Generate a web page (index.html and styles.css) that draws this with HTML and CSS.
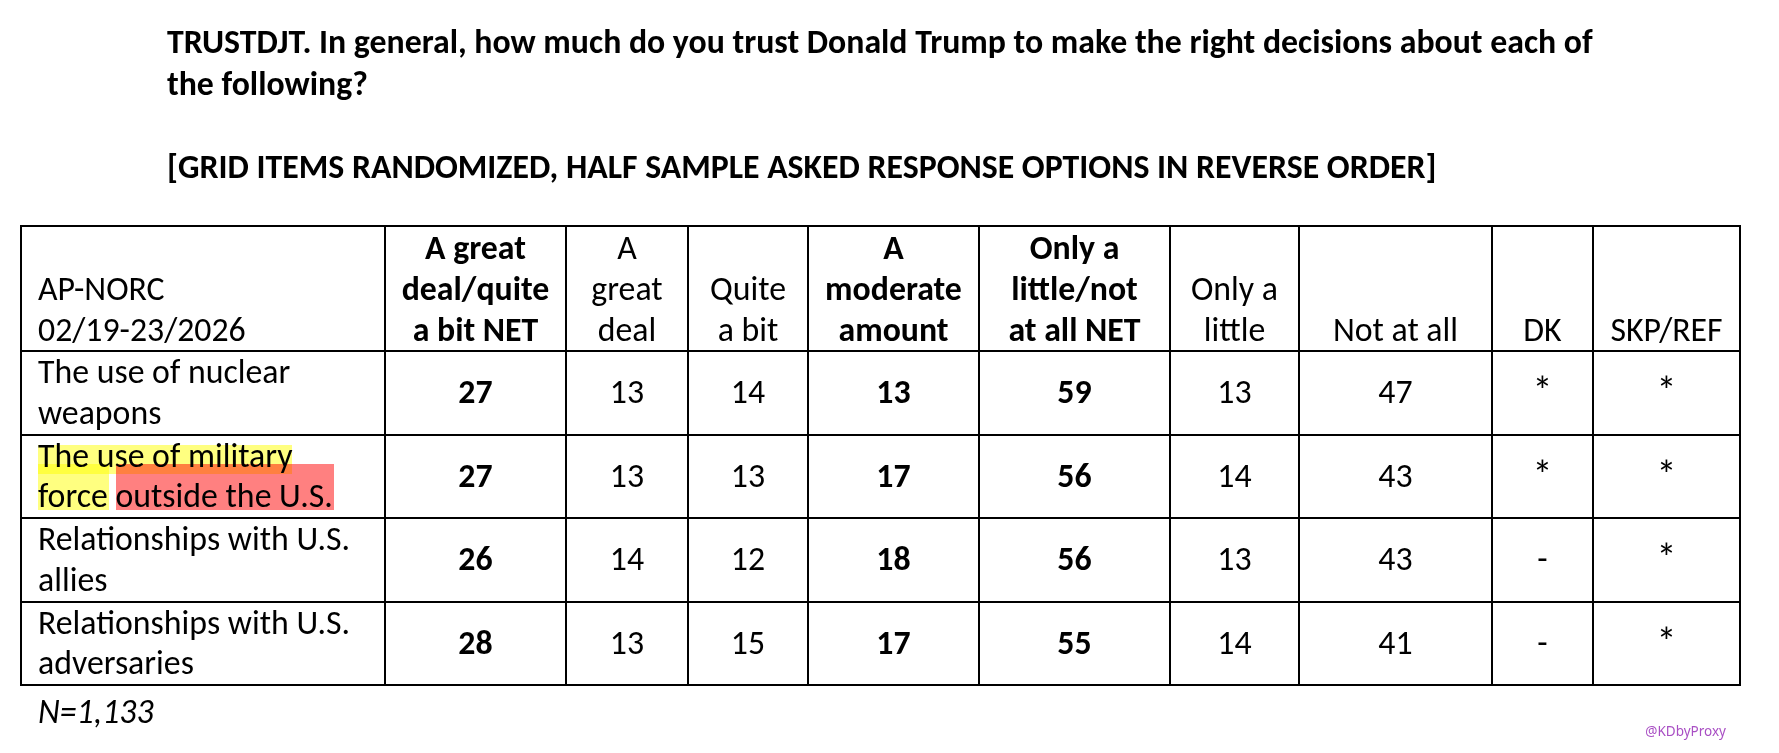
FILE: index.html
```html
<!DOCTYPE html>
<html lang="en">
<head>
<meta charset="utf-8">
<title>TRUSTDJT</title>
<link rel="stylesheet" href="styles.css">
</head>
<body>
<div class="page">
  <div class="question">
    <p class="q-text">TRUSTDJT. In general, how much do you trust Donald Trump to make the right decisions about each of<br>the following?</p>
    <p class="q-note">[GRID ITEMS RANDOMIZED, HALF SAMPLE ASKED RESPONSE OPTIONS IN REVERSE ORDER]</p>
  </div>

  <table class="grid">
    <colgroup>
      <col class="c-label">
      <col class="c-net1">
      <col class="c-great">
      <col class="c-quite">
      <col class="c-mod">
      <col class="c-net2">
      <col class="c-little">
      <col class="c-notall">
      <col class="c-dk">
      <col class="c-skp">
    </colgroup>
    <thead>
      <tr>
        <th class="label">AP-NORC<br>02/19-23/2026</th>
        <th class="bold">A great<br>deal/quite<br>a bit NET</th>
        <th>A<br>great<br>deal</th>
        <th>Quite<br>a bit</th>
        <th class="bold">A<br>moderate<br>amount</th>
        <th class="bold">Only a<br>little/not<br>at all NET</th>
        <th>Only a<br>little</th>
        <th>Not at all</th>
        <th>DK</th>
        <th>SKP/REF</th>
      </tr>
    </thead>
    <tbody>
      <tr>
        <td class="label">The use of nuclear<br>weapons</td>
        <td class="bold">27</td><td>13</td><td>14</td><td class="bold">13</td><td class="bold">59</td><td>13</td><td>47</td><td class="ast">*</td><td class="ast">*</td>
      </tr>
      <tr>
        <td class="label marked">
          <span class="mark mark-y1"></span>
          <span class="mark mark-y2"></span>
          <span class="mark mark-r"></span>
          The use of military<br>force outside the U.S.
        </td>
        <td class="bold">27</td><td>13</td><td>13</td><td class="bold">17</td><td class="bold">56</td><td>14</td><td>43</td><td class="ast">*</td><td class="ast">*</td>
      </tr>
      <tr>
        <td class="label">Relationships with U.S.<br>allies</td>
        <td class="bold">26</td><td>14</td><td>12</td><td class="bold">18</td><td class="bold">56</td><td>13</td><td>43</td><td>-</td><td class="ast">*</td>
      </tr>
      <tr>
        <td class="label">Relationships with U.S.<br>adversaries</td>
        <td class="bold">28</td><td>13</td><td>15</td><td class="bold">17</td><td class="bold">55</td><td>14</td><td>41</td><td>-</td><td class="ast">*</td>
      </tr>
    </tbody>
  </table>

  <div class="footer">
    <p class="n">N=1,133</p>
    <p class="credit">@KDbyProxy</p>
  </div>
</div>
</body>
</html>
```

FILE: styles.css
```css
html, body {
  margin: 0;
  padding: 0;
  background: #ffffff;
}

body {
  font-family: "Carlito", "Calibri", "Lato", "Liberation Sans", sans-serif;
  color: #000000;
  font-size: 33.8px;
  line-height: 41.5px;
}

.page {
  width: 1779px;
  height: 753px;
  overflow: hidden;
  padding: 21px 0 0 20px;
  box-sizing: border-box;
}

.question {
  padding-left: 147px;
  font-weight: bold;
}

.q-text {
  margin: 0;
}

.q-note {
  margin: 41.5px 0 0 0;
}

.grid {
  margin-top: 38px;
  width: 1721px;
  table-layout: fixed;
  border-collapse: collapse;
  line-height: 40.75px;
}

.c-label { width: 364px; }
.c-net1 { width: 181px; }
.c-great { width: 122px; }
.c-quite { width: 120px; }
.c-mod { width: 171px; }
.c-net2 { width: 191px; }
.c-little { width: 129px; }
.c-notall { width: 193px; }
.c-dk { width: 101px; }
.c-skp { width: 147px; }

.grid th,
.grid td {
  border: 2px solid #000000;
  padding: 0 4px;
  text-align: center;
  font-weight: normal;
  white-space: nowrap;
}

.grid th {
  vertical-align: bottom;
  line-height: 41px;
}

.grid td {
  vertical-align: middle;
}

.grid .label {
  text-align: left;
  padding-left: 16px;
}

.grid .bold {
  font-weight: bold;
}

.grid .ast {
  font-size: 40px;
}

.marked {
  position: relative;
}

.mark {
  position: absolute;
  mix-blend-mode: multiply;
}

.mark-y1 {
  left: 16px;
  top: 9px;
  width: 254px;
  height: 29px;
  background: #ffff80;
}

.mark-y2 {
  left: 16px;
  top: 28px;
  width: 71px;
  height: 46px;
  background: #ffff80;
}

.mark-r {
  left: 94px;
  top: 28px;
  width: 218px;
  height: 46px;
  background: #ff8080;
}

.footer {
  display: flex;
  justify-content: space-between;
  align-items: flex-start;
  width: 1706px;
  padding-top: 5px;
}

.n {
  margin: 0 0 0 18px;
  font-style: italic;
}

.credit {
  margin: 31px 0 0 0;
  font-family: "Noto Sans", "Open Sans", sans-serif;
  font-size: 13.5px;
  line-height: 18px;
  color: #a94fc4;
}
```
